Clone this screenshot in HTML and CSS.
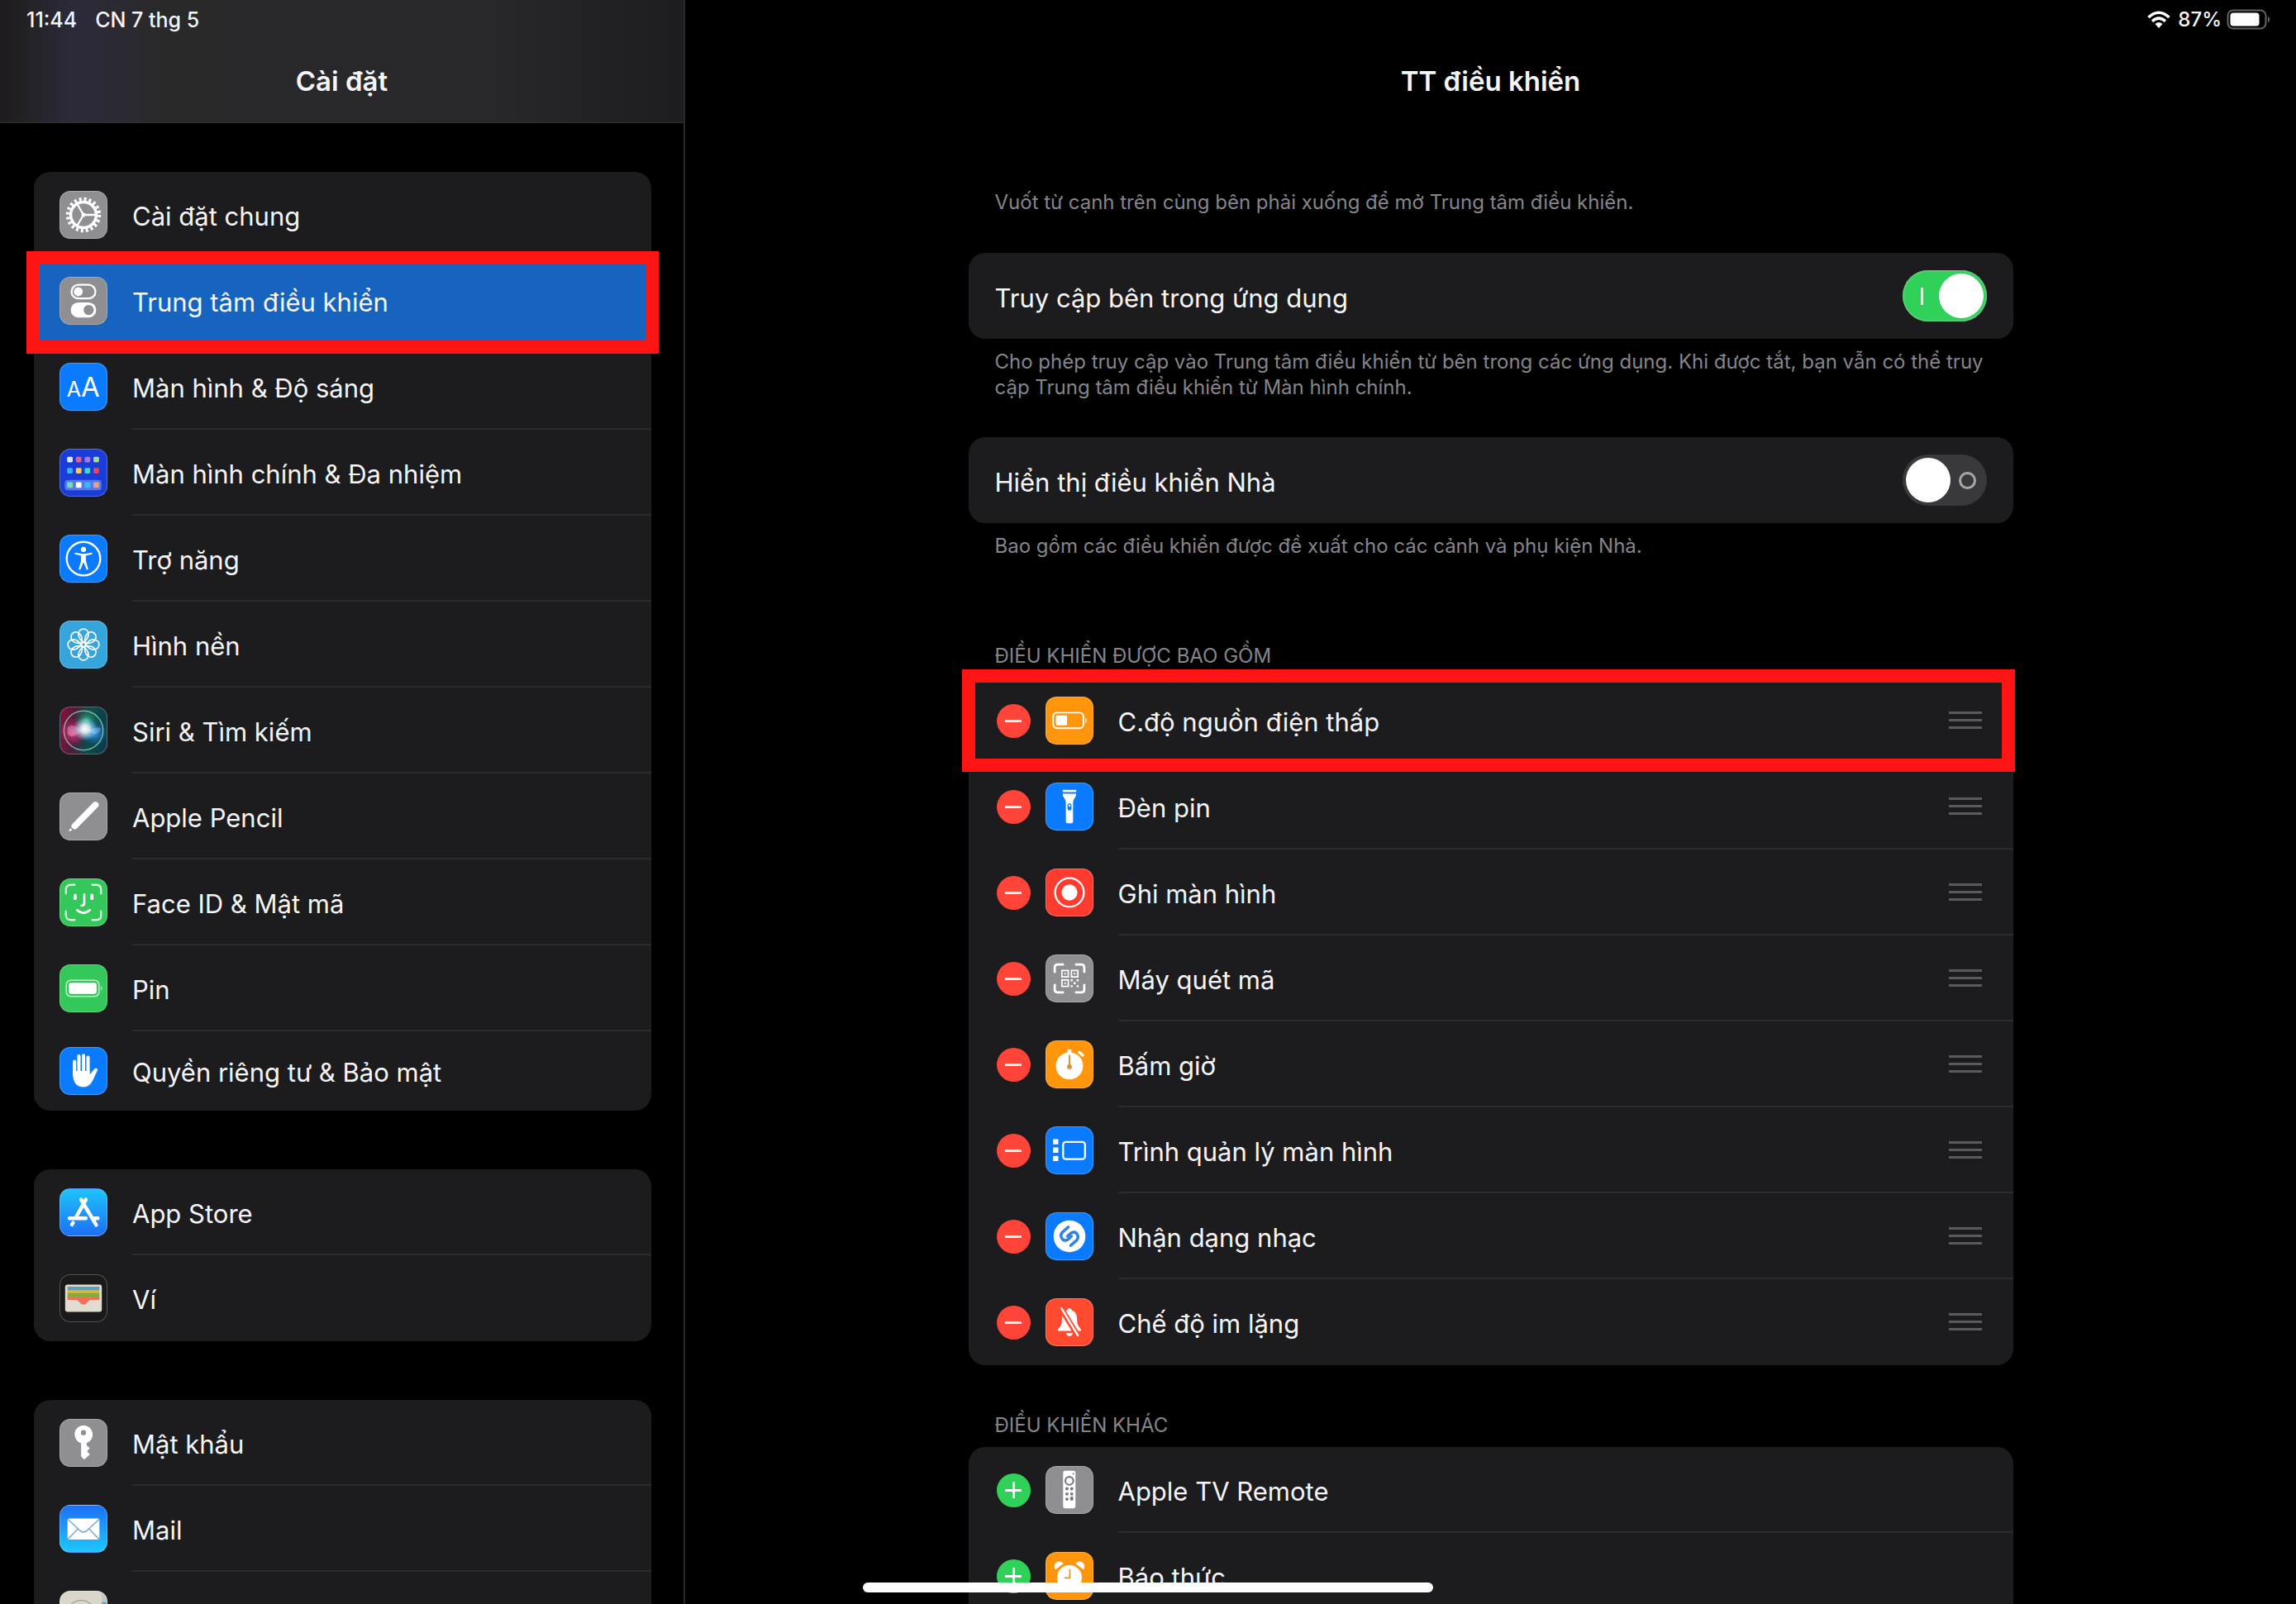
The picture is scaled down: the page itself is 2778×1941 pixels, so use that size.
FILE: index.html
```html
<!DOCTYPE html>
<html lang="vi">
<head>
  <meta charset="UTF-8">
  <meta name="viewport" content="width=device-width, initial-scale=1">
  <title>Cài đặt</title>
  <link rel="stylesheet" href="styles.css">
</head>
<body>

  <aside class="sidebar">
    <header class="sidebar-header">
      <div class="status">
        <span>11:44</span>
        <span>CN 7 thg 5</span>
      </div>
      <h1 class="title">Cài đặt</h1>
    </header>

    <nav class="sidebar-list">
      <ul class="card">
        <li class="row">
          <svg class="icon gray" viewBox="0 0 58 58">
            <circle cx="29" cy="29" r="19.5" fill="none" stroke="#fff" stroke-width="5" stroke-dasharray="3.1 3.026"/>
            <circle cx="29" cy="29" r="16" fill="none" stroke="#fff" stroke-width="3.6"/>
            <path d="M29 29H45M29 29L21 15.2M29 29L21 42.8" stroke="#fff" stroke-width="2.4"/>
            <circle cx="29" cy="29" r="2.6" fill="#fff"/>
          </svg>
          <a class="label" href="#">Cài đặt chung</a>
        </li>
        <li class="row selected marked">
          <svg class="icon gray" viewBox="0 0 58 58">
            <rect x="14" y="9" width="30" height="17" rx="8.5" fill="none" stroke="#fff" stroke-width="2.4"/>
            <circle cx="22.5" cy="17.5" r="5.6" fill="#fff"/>
            <rect x="13" y="31" width="32" height="19" rx="9.5" fill="#fff"/>
            <circle cx="35.5" cy="40.5" r="6.4" fill="#8e8e93"/>
          </svg>
          <a class="label" href="#">Trung tâm điều khiển</a>
        </li>
        <li class="row">
          <svg class="icon blue" viewBox="0 0 58 58">
            <text class="glyph" x="8" y="41" font-size="26">A</text>
            <text class="glyph" x="26" y="41" font-size="34">A</text>
          </svg>
          <a class="label" href="#">Màn hình &amp; Độ sáng</a>
        </li>
        <li class="row">
          <svg class="icon home" viewBox="0 0 58 58">
            <rect x="5.5" y="38" width="46" height="13" rx="4" fill="#5a78ee"/>
            <rect x="8.5" y="9" width="7" height="7" rx="1.5" fill="#dfe6ff"/>
            <rect x="19.5" y="9" width="7" height="7" rx="1.5" fill="#e0608f"/>
            <rect x="30.5" y="9" width="7" height="7" rx="1.5" fill="#a07af5"/>
            <rect x="41.5" y="9" width="7" height="7" rx="1.5" fill="#a5dc8a"/>
            <rect x="8.5" y="23" width="7" height="7" rx="1.5" fill="#36b3f5"/>
            <rect x="19.5" y="23" width="7" height="7" rx="1.5" fill="#f7c95a"/>
            <rect x="30.5" y="23" width="7" height="7" rx="1.5" fill="#3fd6cf"/>
            <rect x="41.5" y="23" width="7" height="7" rx="1.5" fill="#e6455d"/>
            <rect x="8.5" y="41" width="7" height="7" rx="1.5" fill="#6fe3a0"/>
            <rect x="19.5" y="41" width="7" height="7" rx="1.5" fill="#fff"/>
            <rect x="30.5" y="41" width="7" height="7" rx="1.5" fill="#35bdf2"/>
            <rect x="41.5" y="41" width="7" height="7" rx="1.5" fill="#f0a078"/>
          </svg>
          <a class="label" href="#">Màn hình chính &amp; Đa nhiệm</a>
        </li>
        <li class="row">
          <svg class="icon blue" viewBox="0 0 58 58">
            <circle cx="29" cy="29" r="21" fill="none" stroke="#fff" stroke-width="2.4"/>
            <circle cx="29" cy="17.5" r="3.2" fill="#fff"/>
            <path d="M19 22.5L26.5 24.2H31.5L39 22.5" fill="none" stroke="#fff" stroke-width="2.2" stroke-linecap="round"/>
            <path d="M26 23.5H32V31.5L35 42.5L33 43L29 33.5L25 43L23 42.5L26 31.5Z" fill="#fff"/>
          </svg>
          <a class="label" href="#">Trợ năng</a>
        </li>
        <li class="row">
          <svg class="icon cyan" viewBox="0 0 58 58">
            <g fill="none" stroke="#fff" stroke-width="1.8">
              <circle cx="29" cy="29" r="2.6"/>
              <path id="petal" d="M29 26C24 22.5 22.5 19 22.8 15.5C23.5 7.5 34.5 7.5 35.2 15.5C35.5 19 34 22.5 29 26Z"/>
              <use href="#petal" transform="rotate(45 29 29)"/>
              <use href="#petal" transform="rotate(90 29 29)"/>
              <use href="#petal" transform="rotate(135 29 29)"/>
              <use href="#petal" transform="rotate(180 29 29)"/>
              <use href="#petal" transform="rotate(225 29 29)"/>
              <use href="#petal" transform="rotate(270 29 29)"/>
              <use href="#petal" transform="rotate(315 29 29)"/>
            </g>
          </svg>
          <a class="label" href="#">Hình nền</a>
        </li>
        <li class="row">
          <svg class="icon siri" viewBox="0 0 58 58">
            <defs>
              <radialGradient id="siri-glow">
                <stop offset="0" stop-color="#fff"/>
                <stop offset=".35" stop-color="#e8faff" stop-opacity=".85"/>
                <stop offset="1" stop-color="#8fd8ff" stop-opacity="0"/>
              </radialGradient>
              <radialGradient id="siri-pink">
                <stop offset="0" stop-color="#f0438c"/>
                <stop offset="1" stop-color="#c01f5c" stop-opacity="0"/>
              </radialGradient>
              <radialGradient id="siri-blue">
                <stop offset="0" stop-color="#3aa0f5"/>
                <stop offset="1" stop-color="#1060b0" stop-opacity="0"/>
              </radialGradient>
              <radialGradient id="siri-green">
                <stop offset="0" stop-color="#2fb58a"/>
                <stop offset="1" stop-color="#0c5a48" stop-opacity="0"/>
              </radialGradient>
            </defs>
            <circle cx="33" cy="16" r="18" fill="url(#siri-green)"/>
            <circle cx="16" cy="31" r="18" fill="url(#siri-pink)"/>
            <circle cx="43" cy="32" r="17" fill="url(#siri-blue)"/>
            <circle cx="29" cy="29" r="24.5" fill="none" stroke="#86d8c0" stroke-opacity=".75" stroke-width="1.6"/>
            <path d="M9 25C16 19 22 27 31 28C39 29 44 22 51 27C45 38 38 31 31 29C23 31 15 42 9 33Z" fill="#d8ecff" opacity=".3"/>
            <circle cx="31" cy="27" r="15" fill="url(#siri-glow)"/>
          </svg>
          <a class="label" href="#">Siri &amp; Tìm kiếm</a>
        </li>
        <li class="row">
          <svg class="icon gray" viewBox="0 0 58 58">
            <path d="M18 41L44 14.5" stroke="#fff" stroke-width="8" stroke-linecap="round"/>
            <path d="M10.5 48L12.5 43.5L15 46Z" fill="#fff"/>
          </svg>
          <a class="label" href="#">Apple Pencil</a>
        </li>
        <li class="row">
          <svg class="icon green" viewBox="0 0 58 58">
            <g fill="none" stroke="#fff" stroke-linecap="round">
              <path d="M7 18V13Q7 7 13 7H18M40 7H45Q51 7 51 13V18M51 40V45Q51 51 45 51H40M18 51H13Q7 51 7 45V40" stroke-width="2.4" stroke-opacity=".8"/>
              <path d="M18.5 20V24M39.5 20V24" stroke-width="4"/>
              <path d="M30 19V30Q30 33 26.5 33" stroke-width="2.8"/>
              <path d="M21 38.5Q29 45.5 37 38.5" stroke-width="2.8"/>
            </g>
          </svg>
          <a class="label" href="#">Face ID &amp; Mật mã</a>
        </li>
        <li class="row">
          <svg class="icon green" viewBox="0 0 58 58">
            <rect x="7.5" y="19" width="41" height="20" rx="5.5" fill="none" stroke="#fff" stroke-opacity=".7" stroke-width="1.6"/>
            <rect x="10.5" y="22" width="35" height="14" rx="2.5" fill="#fff"/>
            <path d="M51 26Q54 29 51 32Z" fill="#fff" fill-opacity=".7"/>
          </svg>
          <a class="label" href="#">Pin</a>
        </li>
        <li class="row last">
          <svg class="icon blue" viewBox="0 0 58 58">
            <path d="M17.8 17V34M23.3 10.5V30M29 9.5V30M34.7 12V32" stroke="#fff" stroke-width="4.2" stroke-linecap="round"/>
            <path d="M15.7 29H36.8V33.5C39.5 31.5 41 27.5 43.5 26C45.5 25 47.3 26.2 46.5 28.2C43.5 34 41.5 41 37.5 45.5C32 51 22.5 50 18.5 44C16 40 15.7 36 15.7 29Z" fill="#fff"/>
          </svg>
          <a class="label" href="#">Quyền riêng tư &amp; Bảo mật</a>
        </li>
      </ul>

      <ul class="card">
        <li class="row">
          <svg class="icon store" viewBox="0 0 58 58">
            <path d="M32 13L19.5 35.5M26 13L45 45M11.5 36.5H32M42 36.5H47M16 42L14.5 44.5" fill="none" stroke="#fff" stroke-width="4.6" stroke-linecap="round"/>
          </svg>
          <a class="label" href="#">App Store</a>
        </li>
        <li class="row">
          <svg class="icon wallet" viewBox="0 0 58 58">
            <rect x="6" y="12" width="46" height="34" rx="3" fill="#e0dccf"/>
            <rect x="9" y="14.5" width="40" height="5" fill="#5aa0b8"/>
            <rect x="9" y="19" width="40" height="4" fill="#e2b53a"/>
            <rect x="9" y="22.5" width="40" height="7" fill="#7fae3e"/>
            <path d="M9 28H49V31H38C35 31 33 37 29 37C25 37 23 31 20 31H9Z" fill="#f0705c"/>
          </svg>
          <a class="label" href="#">Ví</a>
        </li>
      </ul>

      <ul class="card">
        <li class="row">
          <svg class="icon gray" viewBox="0 0 58 58">
            <path fill-rule="evenodd" d="M29 7A11.5 11.5 0 0 1 33 29.3V32L37 35.5L33.5 39.5L37 43.5L30 50L26 46V29.5A11.5 11.5 0 0 1 29 7ZM29 13A3.2 3.2 0 1 0 29 19.4A3.2 3.2 0 1 0 29 13Z" fill="#fff"/>
          </svg>
          <a class="label" href="#">Mật khẩu</a>
        </li>
        <li class="row">
          <svg class="icon mail" viewBox="0 0 58 58">
            <rect x="9" y="16" width="40" height="26.5" rx="2" fill="#fff"/>
            <path d="M9.5 17L25 31.5Q29 35 33 31.5L48.5 17M9.5 42L22 29M48.5 42L36 29" fill="none" stroke="#6fa8e0" stroke-width="1.5"/>
          </svg>
          <a class="label" href="#">Mail</a>
        </li>
        <li class="row">
          <svg class="icon contacts" viewBox="0 0 58 58">
            <rect x="52" y="0" width="6" height="13" fill="#c9c7bf"/>
            <rect x="52" y="13" width="6" height="13" fill="#5ba7cf"/>
            <rect x="52" y="26" width="6" height="13" fill="#d9a45a"/>
            <circle cx="26" cy="29" r="18" fill="none" stroke="#a8a498" stroke-width="1.5"/>
            <circle cx="26" cy="24" r="7" fill="#a8a498"/>
          </svg>
          <a class="label" href="#" aria-label="Danh bạ"></a>
        </li>
      </ul>
    </nav>
  </aside>

  <main class="main">
    <header class="main-header">
      <div class="status status-right">
        <svg class="wifi" viewBox="0 0 28 22">
          <g fill="none" stroke="#fff" stroke-width="3.4">
            <path d="M1.5 8Q14 -3.5 26.5 8"/>
            <path d="M6 12.8Q14 5.5 22 12.8"/>
          </g>
          <path d="M9.5 16Q14 12 18.5 16L14 21Z" fill="#fff"/>
        </svg>
        <span>87%</span>
        <svg class="battery" viewBox="0 0 54 26">
          <rect x="1.5" y="1.5" width="46" height="22" rx="6.5" fill="none" stroke="#636366" stroke-width="2"/>
          <rect x="4.5" y="4.5" width="35" height="16" rx="3.5" fill="#fff"/>
          <path d="M50 8.5Q54.5 12.5 50 16.5Z" fill="#636366"/>
        </svg>
      </div>
      <h2 class="title">TT điều khiển</h2>
    </header>

    <div class="content">
      <p class="note">Vuốt từ cạnh trên cùng bên phải xuống để mở Trung tâm điều khiển.</p>

      <div class="card">
        <div class="row row-toggle">
          <label class="label" for="in-app">Truy cập bên trong ứng dụng</label>
          <input class="toggle" id="in-app" type="checkbox" checked>
        </div>
      </div>
      <p class="note">Cho phép truy cập vào Trung tâm điều khiển từ bên trong các ứng dụng. Khi được tắt, bạn vẫn có thể truy cập Trung tâm điều khiển từ Màn hình chính.</p>

      <div class="card">
        <div class="row row-toggle">
          <label class="label" for="home-controls">Hiển thị điều khiển Nhà</label>
          <input class="toggle" id="home-controls" type="checkbox">
        </div>
      </div>
      <p class="note">Bao gồm các điều khiển được đề xuất cho các cảnh và phụ kiện Nhà.</p>

      <h3 class="section">ĐIỀU KHIỂN ĐƯỢC BAO GỒM</h3>
      <ul class="card">
        <li class="row marked">
          <button class="remove" type="button" aria-label="Xóa"></button>
          <svg class="icon orange" viewBox="0 0 58 58">
            <rect x="8.5" y="19" width="38" height="19.5" rx="5" fill="none" stroke="#fff" stroke-width="2"/>
            <rect x="12" y="22.5" width="14" height="12.5" rx="1.5" fill="#fff"/>
            <path d="M49 25Q52.5 28.7 49 32.5Z" fill="#fff"/>
          </svg>
          <span class="label">C.độ nguồn điện thấp</span>
          <span class="handle"></span>
        </li>
        <li class="row">
          <button class="remove" type="button" aria-label="Xóa"></button>
          <svg class="icon blue" viewBox="0 0 58 58">
            <rect x="20.5" y="8" width="17" height="3" rx="1" fill="#fff"/>
            <path d="M20.5 13H37.5C37.5 18 33.5 19 33.5 24V48Q33.5 50 31.5 50H26.5Q24.5 50 24.5 48V24C24.5 19 20.5 18 20.5 13Z" fill="#fff"/>
            <rect x="26.5" y="25" width="5" height="9" rx="2.5" fill="#0a7aff"/>
            <circle cx="29" cy="28" r="1.3" fill="#fff"/>
          </svg>
          <span class="label">Đèn pin</span>
          <span class="handle"></span>
        </li>
        <li class="row">
          <button class="remove" type="button" aria-label="Xóa"></button>
          <svg class="icon red" viewBox="0 0 58 58">
            <circle cx="29" cy="29" r="18" fill="none" stroke="#fff" stroke-width="2.4"/>
            <circle cx="29" cy="29" r="10" fill="#fff"/>
          </svg>
          <span class="label">Ghi màn hình</span>
          <span class="handle"></span>
        </li>
        <li class="row">
          <button class="remove" type="button" aria-label="Xóa"></button>
          <svg class="icon gray" viewBox="0 0 58 58">
            <g fill="none" stroke="#fff">
              <path d="M10.5 22V15Q10.5 11.5 14 11.5H22M36 11.5H44Q47.5 11.5 47.5 15V22M47.5 36V43Q47.5 46.5 44 46.5H36M22 46.5H14Q10.5 46.5 10.5 43V36" stroke-width="2.8"/>
              <path d="M19.5 19H27.5V27H19.5ZM31.5 19H39.5V27H31.5ZM19.5 31H27.5V39H19.5Z" stroke-width="1.8"/>
            </g>
            <path d="M22.5 22H24.5V24H22.5ZM34.5 22H36.5V24H34.5ZM22.5 34H24.5V36H22.5ZM30.5 30H33V32.5H30.5ZM38 30H40.5V32.5H38ZM34.2 33.7H36.7V36.2H34.2ZM30.5 37.5H33V40H30.5ZM38 37.5H40.5V40H38Z" fill="#fff"/>
          </svg>
          <span class="label">Máy quét mã</span>
          <span class="handle"></span>
        </li>
        <li class="row">
          <button class="remove" type="button" aria-label="Xóa"></button>
          <svg class="icon orange" viewBox="0 0 58 58">
            <circle cx="29" cy="31" r="17" fill="#fff"/>
            <rect x="26.5" y="10" width="5" height="6" rx="1.5" fill="#fff"/>
            <path d="M41.5 14L45.5 17.5" stroke="#fff" stroke-width="3.6" stroke-linecap="round"/>
            <path d="M29 18V32" stroke="#d99332" stroke-width="2" stroke-linecap="round"/>
            <circle cx="29" cy="32" r="3" fill="#d99332"/>
          </svg>
          <span class="label">Bấm giờ</span>
          <span class="handle"></span>
        </li>
        <li class="row">
          <button class="remove" type="button" aria-label="Xóa"></button>
          <svg class="icon blue" viewBox="0 0 58 58">
            <path d="M8.5 15H15V21.5H8.5ZM8.5 25.5H15V32H8.5ZM8.5 36H15V42.5H8.5Z" fill="#fff"/>
            <rect x="21" y="18.5" width="27.5" height="21.5" rx="3.5" fill="none" stroke="#fff" stroke-width="2.4"/>
          </svg>
          <span class="label">Trình quản lý màn hình</span>
          <span class="handle"></span>
        </li>
        <li class="row">
          <button class="remove" type="button" aria-label="Xóa"></button>
          <svg class="icon blue" viewBox="0 0 58 58">
            <circle cx="29" cy="29" r="20" fill="#fff"/>
            <g fill="none" stroke="#2f80e8" stroke-width="3.6" stroke-linecap="round">
              <path d="M27.5 17.5L20.5 23.5C16 28 19.5 35 25 34C27.5 33.5 29 31 31.5 29"/>
              <path d="M30.5 40.5L37.5 34.5C42 30 38.5 23 33 24C30.5 24.5 29 27 26.5 29"/>
            </g>
          </svg>
          <span class="label">Nhận dạng nhạc</span>
          <span class="handle"></span>
        </li>
        <li class="row">
          <button class="remove" type="button" aria-label="Xóa"></button>
          <svg class="icon coral" viewBox="0 0 58 58">
            <path d="M29 11.5C31 11.5 31.5 13 31.5 14C37 15.5 38.5 20 38.5 26C38.5 33 41 35 43.5 38V40H14.5V38C17 35 19.5 33 19.5 26C19.5 20 21 15.5 26.5 14C26.5 13 27 11.5 29 11.5Z" fill="#fff"/>
            <path d="M25 42.5H33Q32.5 46.5 29 46.5T25 42.5Z" fill="#fff"/>
            <path d="M18 11L39.5 46" stroke="#ff4a30" stroke-width="7"/>
            <path d="M19 11.5L39.5 45.5" stroke="#fff" stroke-width="2.4" stroke-linecap="round"/>
          </svg>
          <span class="label">Chế độ im lặng</span>
          <span class="handle"></span>
        </li>
      </ul>

      <h3 class="section">ĐIỀU KHIỂN KHÁC</h3>
      <ul class="card">
        <li class="row">
          <button class="add" type="button" aria-label="Thêm"></button>
          <svg class="icon gray" viewBox="0 0 58 58">
            <rect x="21" y="5" width="15.5" height="47" rx="2.5" fill="#fff"/>
            <circle cx="28.8" cy="17.5" r="5" fill="none" stroke="#77777c" stroke-width="2.2"/>
            <circle cx="33.8" cy="8.8" r="1" fill="#77777c"/>
            <g fill="#77777c">
              <circle cx="25.8" cy="27.5" r="2"/>
              <circle cx="31.8" cy="27.5" r="2"/>
              <circle cx="25.8" cy="34" r="2"/>
              <circle cx="31.8" cy="34" r="2"/>
              <circle cx="25.8" cy="40.5" r="2"/>
              <rect x="29.8" y="37" width="4" height="5.5" rx="2"/>
            </g>
          </svg>
          <span class="label">Apple TV Remote</span>
        </li>
        <li class="row">
          <button class="add" type="button" aria-label="Thêm"></button>
          <svg class="icon orange" viewBox="0 0 58 58">
            <circle cx="29" cy="31" r="15.5" fill="#fff"/>
            <path d="M11.5 20C9 13.5 16 9 20.5 13.5ZM46.5 20C49 13.5 42 9 37.5 13.5Z" fill="#fff" stroke="#fff" stroke-width="1.5" stroke-linejoin="round"/>
            <path d="M29.5 20.5V31.5H22.5" fill="none" stroke="#d99332" stroke-width="1.8"/>
          </svg>
          <span class="label">Báo thức</span>
        </li>
      </ul>
    </div>
  </main>

  <div class="home-indicator"></div>

</body>
</html>
```

FILE: styles.css
```css
*,
*::before,
*::after {
  box-sizing: border-box;
}

body {
  display: flex;
  height: 100vh;
  margin: 0;
  overflow: hidden;
  background: #000;
  color: #f5f5f7;
  font-family: Inter, "Noto Sans", sans-serif;
  font-size: 31px;
}

ul {
  margin: 0;
  padding: 0;
  list-style: none;
}

/* Sidebar */

.sidebar {
  flex: 0 0 829px;
  overflow: hidden;
  border-right: 2px solid #2a2a2c;
}

.sidebar-header {
  height: 149px;
  background: linear-gradient(90deg, #1e1c20 0, #232227 36px, #2d2b3a 90px, #2b2a33 140px, #29292a 200px, #28282a 600px, #1d1d1f 100%);
  border-bottom: 1px solid #333;
}

.sidebar-list {
  display: flex;
  flex-direction: column;
  gap: 71px;
  padding: 59px 39px 0 41px;
}

/* Status bar and titles */

.status {
  display: flex;
  gap: 22px;
  height: 70px;
  padding: 8px 32px 0;
  font-size: 25px;
  font-weight: 500;
  line-height: 32px;
}

.status-right {
  justify-content: flex-end;
  align-items: flex-start;
  gap: 6px;
  padding-right: 30px;
  font-size: 24px;
}

.wifi {
  width: 28px;
  height: 22px;
  margin: 5px 3px 0 0;
}

.battery {
  width: 54px;
  height: 26px;
  margin-top: 3px;
}

.title {
  margin: 0;
  font-size: 33px;
  font-weight: 600;
  line-height: 56px;
  text-align: center;
}

/* Cards */

.card {
  background: #1c1c1e;
  border-radius: 20px;
}

.row {
  position: relative;
  display: flex;
  align-items: center;
  height: 104px;
  padding-left: 31px;
}

.row.last {
  height: 96px;
}

.label {
  flex: 1;
  align-self: stretch;
  display: flex;
  align-items: center;
  padding-top: 5px;
  border-bottom: 2px solid #2c2c2e;
  color: inherit;
  text-decoration: none;
}

.row:last-child .label {
  border-bottom-color: transparent;
}

.selected {
  background: #1764c0;
}

.selected .label {
  border-bottom-color: transparent;
}

.marked::after {
  content: "";
  position: absolute;
  inset: -8px -9px -12px;
  border: 16px solid #ff1414;
  z-index: 1;
}

.content .marked::after {
  inset: -10px -2px -10px -8px;
}

/* Icons */

.icon {
  width: 58px;
  height: 58px;
  margin-right: 30px;
  border-radius: 13px;
  border: 1px solid rgba(255, 255, 255, 0.25);
}

.gray { background: #8e8e93; }
.blue { background: #0a7aff; }
.green { background: #34c759; }
.orange { background: #ff950a; }
.red { background: #ff3b30; }
.coral { background: #ff4a30; }
.cyan { background: #35a5dc; }
.home { background: #1a3cd8; }
.siri { background: linear-gradient(100deg, #8a1238 0, #4a1d3c 35%, #0e4a48 60%, #0d3a4a 100%); }
.store { background: linear-gradient(#1ec4fb, #1e6ff5); }
.wallet { background: #1a1a1b; }
.mail { background: linear-gradient(#1e6ff5, #1ec8fd); }
.contacts { background: #d9d6ca; }

.glyph {
  fill: #fff;
  font-weight: 400;
}

/* Right pane */

.main {
  flex: 1;
  overflow: hidden;
}

.main-header {
  height: 149px;
}

.content {
  max-width: 1264px;
  margin: 0 auto;
  padding-top: 80px;
}

.content .row {
  padding-left: 34px;
}

.note,
.section {
  margin: 0;
  padding: 0 32px;
  color: #85858b;
  font-size: 24px;
  font-weight: 400;
  line-height: 31px;
}

.note {
  padding-bottom: 46px;
}

.card + .note {
  padding-top: 12px;
  padding-bottom: 45px;
}

.section {
  padding-top: 57px;
  padding-bottom: 11px;
}

.content .row-toggle {
  padding: 0 32px;
}

.row-toggle .label {
  border: 0;
}

.toggle {
  appearance: none;
  position: relative;
  width: 102px;
  height: 62px;
  margin: 0;
  border-radius: 31px;
  background: #39393d;
}

.toggle::before {
  content: "";
  position: absolute;
  top: 4px;
  left: 4px;
  width: 54px;
  height: 54px;
  border-radius: 50%;
  background: #fff;
}

.toggle::after {
  content: "";
  position: absolute;
  top: 21px;
  right: 13px;
  width: 21px;
  height: 21px;
  border: 3px solid #a5a5aa;
  border-radius: 50%;
}

.toggle:checked {
  background: #30d158;
  box-shadow: inset 0 0 0 2px #5ac878;
}

.toggle:checked::before {
  left: 44px;
}

.toggle:checked::after {
  left: 22px;
  width: 3px;
  border: 0;
  border-radius: 0;
  background: #d8f5df;
}

.remove,
.add {
  width: 41px;
  height: 41px;
  margin: 0 18px 0 0;
  padding: 0;
  border: 0;
  border-radius: 50%;
  background: linear-gradient(#fff, #fff) center / 20px 3px no-repeat #ff453a;
}

.add {
  background:
    linear-gradient(#fff, #fff) center / 20px 3px no-repeat,
    linear-gradient(#fff, #fff) center / 3px 20px no-repeat,
    #30d158;
}

.handle {
  align-self: stretch;
  display: flex;
  align-items: center;
  padding-right: 38px;
  border-bottom: 2px solid #2c2c2e;
}

.row:last-child .handle {
  border-bottom-color: transparent;
}

.handle::before {
  content: "";
  width: 40px;
  height: 21px;
  background: repeating-linear-gradient(#5a5a5e 0 3px, transparent 3px 9px);
}

.home-indicator {
  position: fixed;
  bottom: 14px;
  left: 50%;
  width: 690px;
  height: 12px;
  border-radius: 6px;
  background: #fff;
  transform: translateX(-50%);
  z-index: 2;
}
```
